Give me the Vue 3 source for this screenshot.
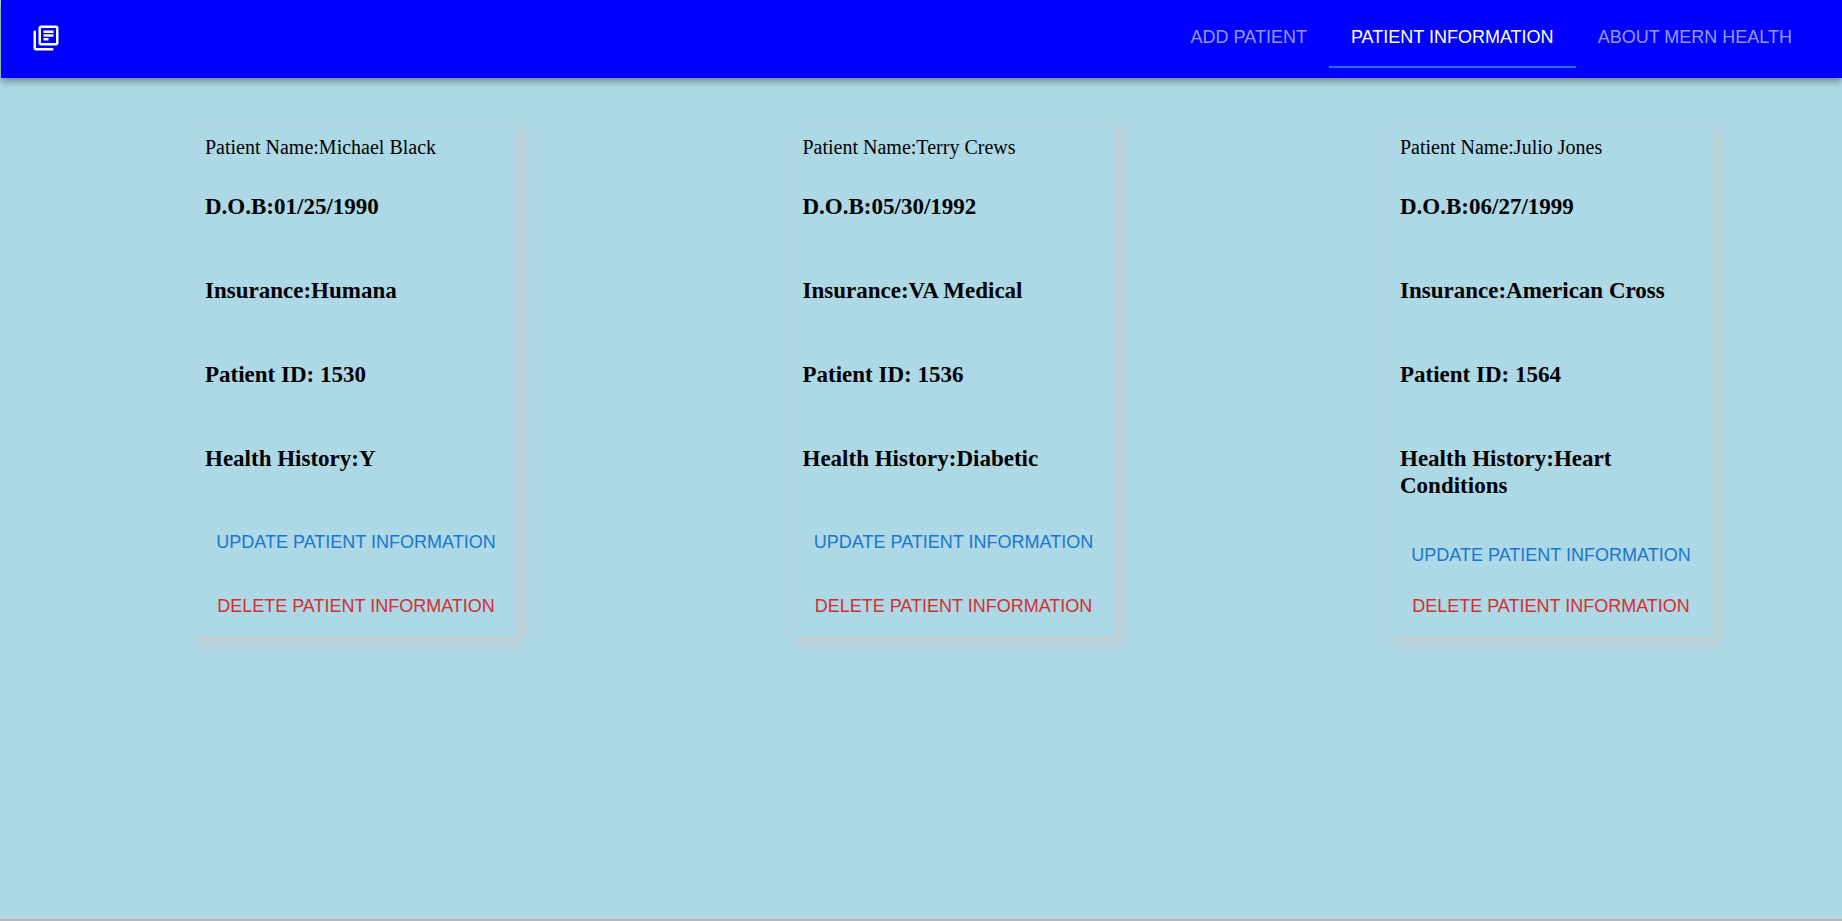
<script setup>
import { ref } from 'vue'

const tabs = ['Add Patient', 'Patient Information', 'About MERN Health']
const current = ref(1)

const patients = [
  { name: 'Michael Black', dob: '01/25/1990', insurance: 'Humana', id: 1530, history: 'Y' },
  { name: 'Terry Crews', dob: '05/30/1992', insurance: 'VA Medical', id: 1536, history: 'Diabetic' },
  { name: 'Julio Jones', dob: '06/27/1999', insurance: 'American Cross', id: 1564, history: 'Heart Conditions' },
]
</script>

<template>
  <div class="page">
    <header class="bar">
      <a class="logo" href="#" aria-label="Home">
        <svg viewBox="0 0 24 24" width="30" height="30" fill="currentColor" aria-hidden="true">
          <path d="M4 7c0-.55-.45-1-1-1s-1 .45-1 1v13c0 1.1.9 2 2 2h13c.55 0 1-.45 1-1s-.45-1-1-1H4V7zm16-5H8c-1.1 0-2 .9-2 2v12c0 1.1.9 2 2 2h12c1.1 0 2-.9 2-2V4c0-1.1-.9-2-2-2zm0 14H8V4h12v12zM10 9h8v2h-8zm0 3h4v2h-4zm0-6h8v2h-8z" />
        </svg>
      </a>
      <nav class="tabs">
        <a
          v-for="(tab, i) in tabs"
          :key="tab"
          href="#"
          class="tab"
          :class="{ active: i === current }"
          @click.prevent="current = i"
        >{{ tab }}</a>
      </nav>
    </header>

    <main class="cards">
      <article v-for="p in patients" :key="p.id" class="card">
        <div class="details">
          <p class="name">Patient Name:{{ p.name }}</p>
          <h3>D.O.B:{{ p.dob }}</h3>
          <h3>Insurance:{{ p.insurance }}</h3>
          <h3>Patient ID: {{ p.id }}</h3>
          <h3>Health History:{{ p.history }}</h3>
        </div>
        <button type="button" class="action update">Update Patient Information</button>
        <button type="button" class="action delete">Delete Patient Information</button>
      </article>
    </main>
  </div>
</template>

<style>
body {
  margin: 0;
  background: lightblue;
}
</style>

<style scoped>
.page {
  box-sizing: border-box;
  min-height: 100vh;
  background: lightblue;
  border-bottom: 2px solid #b8b8b8;
  font-family: "Liberation Serif", "Times New Roman", serif;
  color: #000;
}

.bar {
  display: flex;
  align-items: center;
  justify-content: space-between;
  box-sizing: border-box;
  margin-left: 1px;
  padding: 8px 28px 10px 30px;
  background: blue;
  color: #fff;
  box-shadow:
    0 3px 5px -1px rgba(0, 0, 0, 0.2),
    0 5px 6px 0 rgba(0, 0, 0, 0.14),
    0 1px 12px 0 rgba(0, 0, 0, 0.12);
}

.logo {
  display: flex;
  color: inherit;
}

.tabs {
  display: flex;
}

.tab {
  display: flex;
  align-items: center;
  box-sizing: border-box;
  height: 60px;
  padding: 0 22px;
  border-bottom: 2px solid transparent;
  font-family: "Liberation Sans", Arial, sans-serif;
  font-size: 18px;
  line-height: 22px;
  text-transform: uppercase;
  text-decoration: none;
  color: rgba(255, 255, 255, 0.6);
}

.tab.active {
  color: #fff;
  border-bottom-color: #1976d2;
}

.cards {
  display: grid;
  grid-template-columns: repeat(3, 324px);
  justify-content: space-between;
  padding: 45px 129px 45px 194px;
}

.card {
  display: flex;
  flex-direction: column;
  justify-content: space-between;
  gap: 5px;
  box-sizing: border-box;
  padding: 13px 11px 8px;
  box-shadow: 5px 5px 10px #ccc;
  background: lightblue;
}

.details {
  padding-bottom: 28px;
}

.name {
  margin: 0 0 34px;
  font-size: 20px;
  line-height: 23px;
}

h3 {
  margin: 0;
  font-size: 23px;
  line-height: 27px;
}

h3 + h3 {
  margin-top: 57px;
}

.action {
  padding: 8px 10px;
  border: 0;
  border-radius: 5px;
  background: transparent;
  font-family: "Liberation Sans", Arial, sans-serif;
  font-size: 18px;
  line-height: 30px;
  text-transform: uppercase;
  white-space: nowrap;
  cursor: pointer;
}

.update {
  color: #1976d2;
}

.delete {
  color: #d32f2f;
}
</style>
